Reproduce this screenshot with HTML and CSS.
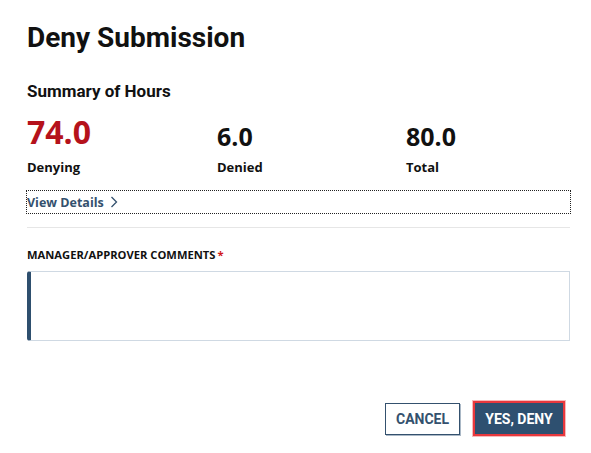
FILE: index.html
```html
<!DOCTYPE html>
<html lang="en">
<head>
<meta charset="UTF-8" />
<meta name="viewport" content="width=device-width, initial-scale=1" />
<title>Deny Submission</title>
<link rel="stylesheet" href="styles.css">
</head>
<body>

  <!-- Deny dialog -->
  <div class="dialog">
    <h1 class="dialog-title">Deny Submission</h1>

    <h2 class="summary-title">Summary of Hours</h2>
    <div class="summary">
      <div class="stat">
        <div class="stat-value stat-value-big">74.0</div>
        <div class="stat-label">Denying</div>
      </div>
      <div class="stat">
        <div class="stat-value">6.0</div>
        <div class="stat-label">Denied</div>
      </div>
      <div class="stat">
        <div class="stat-value">80.0</div>
        <div class="stat-label">Total</div>
      </div>
    </div>

    <a class="details-link" href="#">
      View Details
      <svg class="chevron" width="8" height="12" viewBox="0 0 8 12" aria-hidden="true">
        <path d="M1.5 1 L6.5 6 L1.5 11" fill="none" stroke="currentColor" stroke-width="1.3" />
      </svg>
    </a>

    <hr class="divider" />

    <label class="field-label" for="comments">MANAGER/APPROVER COMMENTS<span class="required">*</span></label>
    <textarea id="comments" class="comments"></textarea>

    <div class="actions">
      <button class="btn btn-cancel">CANCEL</button>
      <button class="btn btn-deny">YES, DENY</button>
    </div>
  </div>

</body>
</html>
```

FILE: styles.css
```css
* {
  box-sizing: border-box;
}

html, body {
  margin: 0;
  padding: 0;
  background: #fff;
  color: #111;
  width: 591px;
  height: 453px;
  overflow: hidden;
}

.dialog {
  padding: 21px 21px 0 27px;
}

.dialog-title {
  margin: 0;
  font-family: Roboto, "Liberation Sans", sans-serif;
  font-weight: 700;
  font-size: 28px;
  line-height: 34px;
}

.summary-title {
  margin: 26px 0 0;
  font-family: Roboto, "Liberation Sans", sans-serif;
  font-weight: 700;
  font-size: 17px;
  line-height: 20px;
}

/* three stat columns */
.summary {
  display: grid;
  grid-template-columns: 190px 189px 1fr;
  align-items: end;
  margin-top: 12px;
}

.stat-value {
  font-family: "Open Sans", sans-serif;
  font-weight: 700;
  font-size: 25px;
  line-height: 30px;
  color: #111;
}

.stat-value-big {
  font-size: 32px;
  line-height: 38px;
  color: #b5121b;
}

.stat-label {
  margin-top: 7px;
  font-family: "Open Sans", sans-serif;
  font-weight: 700;
  font-size: 13px;
  line-height: 18px;
}

.details-link {
  display: flex;
  align-items: center;
  gap: 6px;
  margin-top: 15px;
  height: 22px;
  font-family: "Open Sans", sans-serif;
  font-weight: 700;
  font-size: 12.5px;
  color: #34516e;
  text-decoration: none;
  outline: 1px dotted #222;
}

.chevron {
  display: block;
}

.divider {
  margin: 14px 0 0;
  border: none;
  border-top: 1px solid #e6e6e6;
}

.field-label {
  display: block;
  margin-top: 19px;
  font-family: "Open Sans", sans-serif;
  font-weight: 700;
  font-size: 11.2px;
  line-height: 16px;
  color: #111;
}

.required {
  color: #d11a1a;
  margin-left: 2px;
}

.comments {
  display: block;
  width: 100%;
  height: 70px;
  margin-top: 8px;
  resize: none;
  border: 1px solid #cfd9e3;
  border-left: 4px solid #2e4f6e;
  border-radius: 3px 0 0 3px;
  font-family: "Open Sans", sans-serif;
  outline: none;
}

.actions {
  display: flex;
  justify-content: flex-end;
  align-items: center;
  gap: 13px;
  margin-top: 60px;
  padding-right: 5px;
}

.btn {
  font-family: Roboto, "Liberation Sans", sans-serif;
  font-weight: 700;
  font-size: 14px;
  cursor: pointer;
}

.btn-cancel {
  width: 75px;
  height: 32px;
  background: #fff;
  color: #34516e;
  border: 1px solid #34516e;
  box-shadow: 1px 1px 0 #aab8c6;
}

.btn-deny {
  width: 92px;
  height: 35px;
  background: #2e5070;
  color: #fff;
  border: 2px solid #e8383d;
  box-shadow: 0 0 0 1px rgba(232, 56, 61, 0.35);
}
```
